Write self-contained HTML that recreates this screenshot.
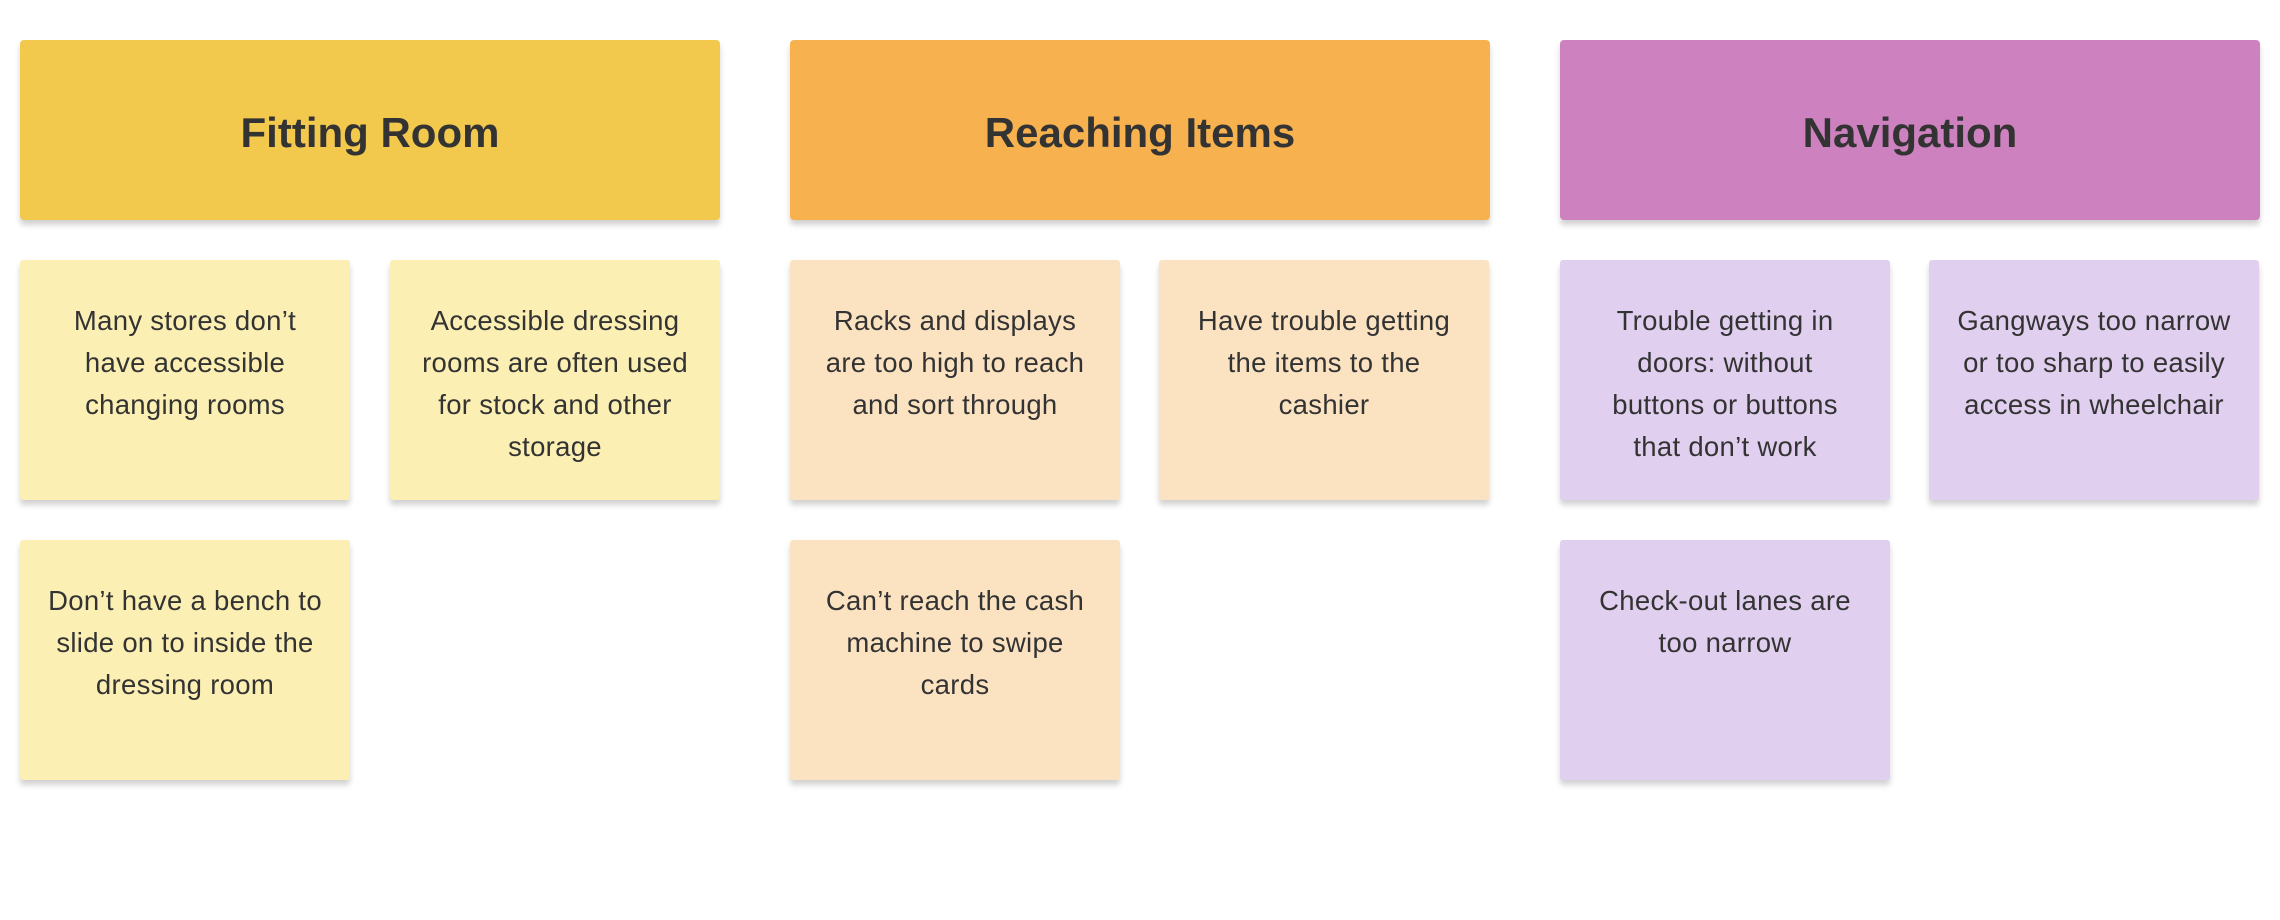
<!DOCTYPE html>
<html><head><style>
body{margin:0;width:2280px;height:920px;background:#fff;position:relative;font-family:"Liberation Sans",sans-serif;color:#333;overflow:hidden}
.h{position:absolute;top:40px;width:700px;height:180px;border-radius:4px;display:flex;align-items:center;justify-content:center;font-weight:bold;font-size:42px;padding-top:6px;box-sizing:border-box;box-shadow:0 5px 6px rgba(0,0,0,.18)}
.c{position:absolute;width:330px;height:240px;border-radius:3px;box-sizing:border-box;padding:40px 0 0;text-align:center;font-size:27.5px;letter-spacing:0.3px;line-height:42px;white-space:nowrap;box-shadow:0 5px 6px rgba(0,0,0,.18)}
.y{background:#fbefb3}.o{background:#fbe3c2}.p{background:#e0cfee}
</style></head><body>
<div class="h" style="left:20px;background:#f2c94d">Fitting Room</div>
<div class="h" style="left:790px;background:#f7b24f">Reaching Items</div>
<div class="h" style="left:1560px;background:#cd82bf">Navigation</div>

<div class="c y" style="left:20px;top:260px">Many stores don’t<br>have accessible<br>changing rooms</div>
<div class="c y" style="left:390px;top:260px">Accessible dressing<br>rooms are often used<br>for stock and other<br>storage</div>
<div class="c y" style="left:20px;top:540px">Don’t have a bench to<br>slide on to inside the<br>dressing room</div>

<div class="c o" style="left:790px;top:260px">Racks and displays<br>are too high to reach<br>and sort through</div>
<div class="c o" style="left:1159px;top:260px">Have trouble getting<br>the items to the<br>cashier</div>
<div class="c o" style="left:790px;top:540px">Can’t reach the cash<br>machine to swipe<br>cards</div>

<div class="c p" style="left:1560px;top:260px">Trouble getting in<br>doors: without<br>buttons or buttons<br>that don’t work</div>
<div class="c p" style="left:1929px;top:260px">Gangways too narrow<br>or too sharp to easily<br>access in wheelchair</div>
<div class="c p" style="left:1560px;top:540px">Check-out lanes are<br>too narrow</div>
</body></html>
